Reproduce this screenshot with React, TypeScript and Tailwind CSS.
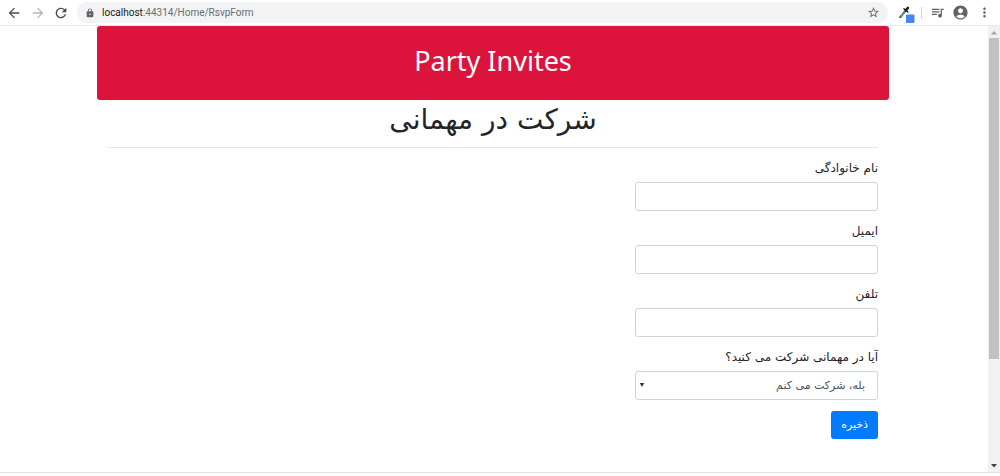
import type { ReactNode } from "react";
import { MdAccountCircle, MdArrowBack, MdArrowForward, MdLock, MdMoreVert, MdQueueMusic, MdRefresh, MdStarBorder } from "react-icons/md";

function EyedropperIcon() {
  return (
    <svg viewBox="0 0 16 17" className="h-[17px] w-4" aria-hidden="true">
      <path d="M1.2 11.2 6.6 4.6" stroke="#4d6b50" strokeWidth="2.2" strokeLinecap="round" />
      <path d="M2 10.2 5.4 6.2" stroke="#b9d6bb" strokeWidth="0.6" />
      <path d="M5 2.8 8.8 6" stroke="#1b1b1b" strokeWidth="1.5" strokeLinecap="round" />
      <path d="M7 4.2 8.8 2" stroke="#1b1b1b" strokeWidth="2.6" strokeLinecap="round" />
      <rect x="7" y="8.5" width="8.5" height="8.5" rx="1" fill="#4285f4" />
    </svg>
  );
}

function Toolbar() {
  return (
    <header className="flex h-[26px] shrink-0 items-center border-b border-[#e8e9eb] bg-white pr-2 pl-[6px] text-[#5f6368]">
      <button type="button" aria-label="Back" className="mr-2 text-[#4a4d51]"><MdArrowBack size={16} /></button>
      <button type="button" aria-label="Forward" className="mr-[7px] text-[#b4b6b9]"><MdArrowForward size={16} /></button>
      <button type="button" aria-label="Reload" className="mr-2 text-[#4a4d51]"><MdRefresh size={16} /></button>
      <div className="flex h-[21px] grow items-center rounded-full bg-[#f1f3f4] pr-2 pl-2">
        <MdLock size={10} className="mr-[7px]" />
        <p className="grow font-[Roboto,sans-serif] text-[10px] leading-4 text-[#6b6e72]">
          <span className="text-[#202124]">localhost</span>:44314/Home/RsvpForm
        </p>
        <button type="button" aria-label="Bookmark"><MdStarBorder size={13} /></button>
      </div>
      <button type="button" aria-label="Color picker" className="ml-[11px] pt-1"><EyedropperIcon /></button>
      <span className="mx-[6px] h-3 w-px bg-[#d3d5d8]" />
      <button type="button" aria-label="Media" className="ml-[2px]"><MdQueueMusic size={15} /></button>
      <button type="button" aria-label="Profile" className="ml-[7px]"><MdAccountCircle size={17} /></button>
      <button type="button" aria-label="Menu" className="ml-2"><MdMoreVert size={15} /></button>
    </header>
  );
}

function Field({ id, label, children }: { id: string; label: string; children: ReactNode }) {
  return (
    <div className="mb-[11px]">
      <label htmlFor={id} className="mb-[5px] block text-[12px] leading-[18px]">{label}</label>
      {children}
    </div>
  );
}

const control = "block h-[29px] w-full rounded-[3px] border border-[#ced4da] bg-white px-3 pt-[2px] text-[11px] text-[#495057]";

function TextField({ id, label, type }: { id: string; label: string; type: string }) {
  return (
    <Field id={id} label={label}>
      <input id={id} type={type} className={control} />
    </Field>
  );
}

function Scrollbar() {
  return (
    <div className="flex w-3 shrink-0 flex-col items-center bg-[#f1f1f1]" aria-hidden="true">
      <svg viewBox="0 0 12 12" className="h-3 w-3"><path d="M3 8.5 6 5l3 3.5z" fill="#a3a3a3" /></svg>
      <div className="h-[72%] w-[10px] bg-[#c1c1c1]" />
      <svg viewBox="0 0 12 12" className="mt-auto h-3 w-3"><path d="M3 4h6L6 7.5z" fill="#404040" /></svg>
    </div>
  );
}

export default function App() {
  return (
    <div className="flex min-h-screen flex-col bg-white pb-[3px]">
      <Toolbar />
      <div className="flex grow border-b border-[#dfe0e5]">
        <main className="grow pr-[2px] font-['DejaVu_Sans',sans-serif] text-[#212529]">
          <div className="mx-auto max-w-[792px]">
            <div className="rounded-[3px] bg-[#dc143c] pt-[17px] pb-[21px] text-center font-['Noto_Sans','Open_Sans',sans-serif] text-[27px] leading-9 text-white">
              <h1>Party Invites</h1>
            </div>
            <div dir="rtl" lang="fa" className="px-[11px]">
              <h2 className="pb-2 text-center text-[28px] leading-[39px] font-medium">شرکت در مهمانی</h2>
              <hr className="mb-[11px] border-[#e8e8e8]" />
              <form className="w-[243px] max-w-full">
                <TextField id="name" label="نام خانوادگی" type="text" />
                <TextField id="email" label="ایمیل" type="email" />
                <TextField id="phone" label="تلفن" type="tel" />
                <Field id="attend" label="آیا در مهمانی شرکت می کنید؟">
                  <div className="relative">
                    <select id="attend" className={control + " appearance-none"}>
                      <option>بله، شرکت می کنم</option>
                    </select>
                    <svg viewBox="0 0 6 6" className="pointer-events-none absolute top-[11px] left-1 h-[6px] w-[6px]" aria-hidden="true">
                      <path d="M0.7 1h4.6L3 5z" fill="#343a40" />
                    </svg>
                  </div>
                </Field>
                <button type="button" className="h-[28px] rounded-[3px] bg-[#007bff] px-[10px] text-[11px] text-white">ذخیره</button>
              </form>
            </div>
          </div>
        </main>
        <Scrollbar />
      </div>
    </div>
  );
}
